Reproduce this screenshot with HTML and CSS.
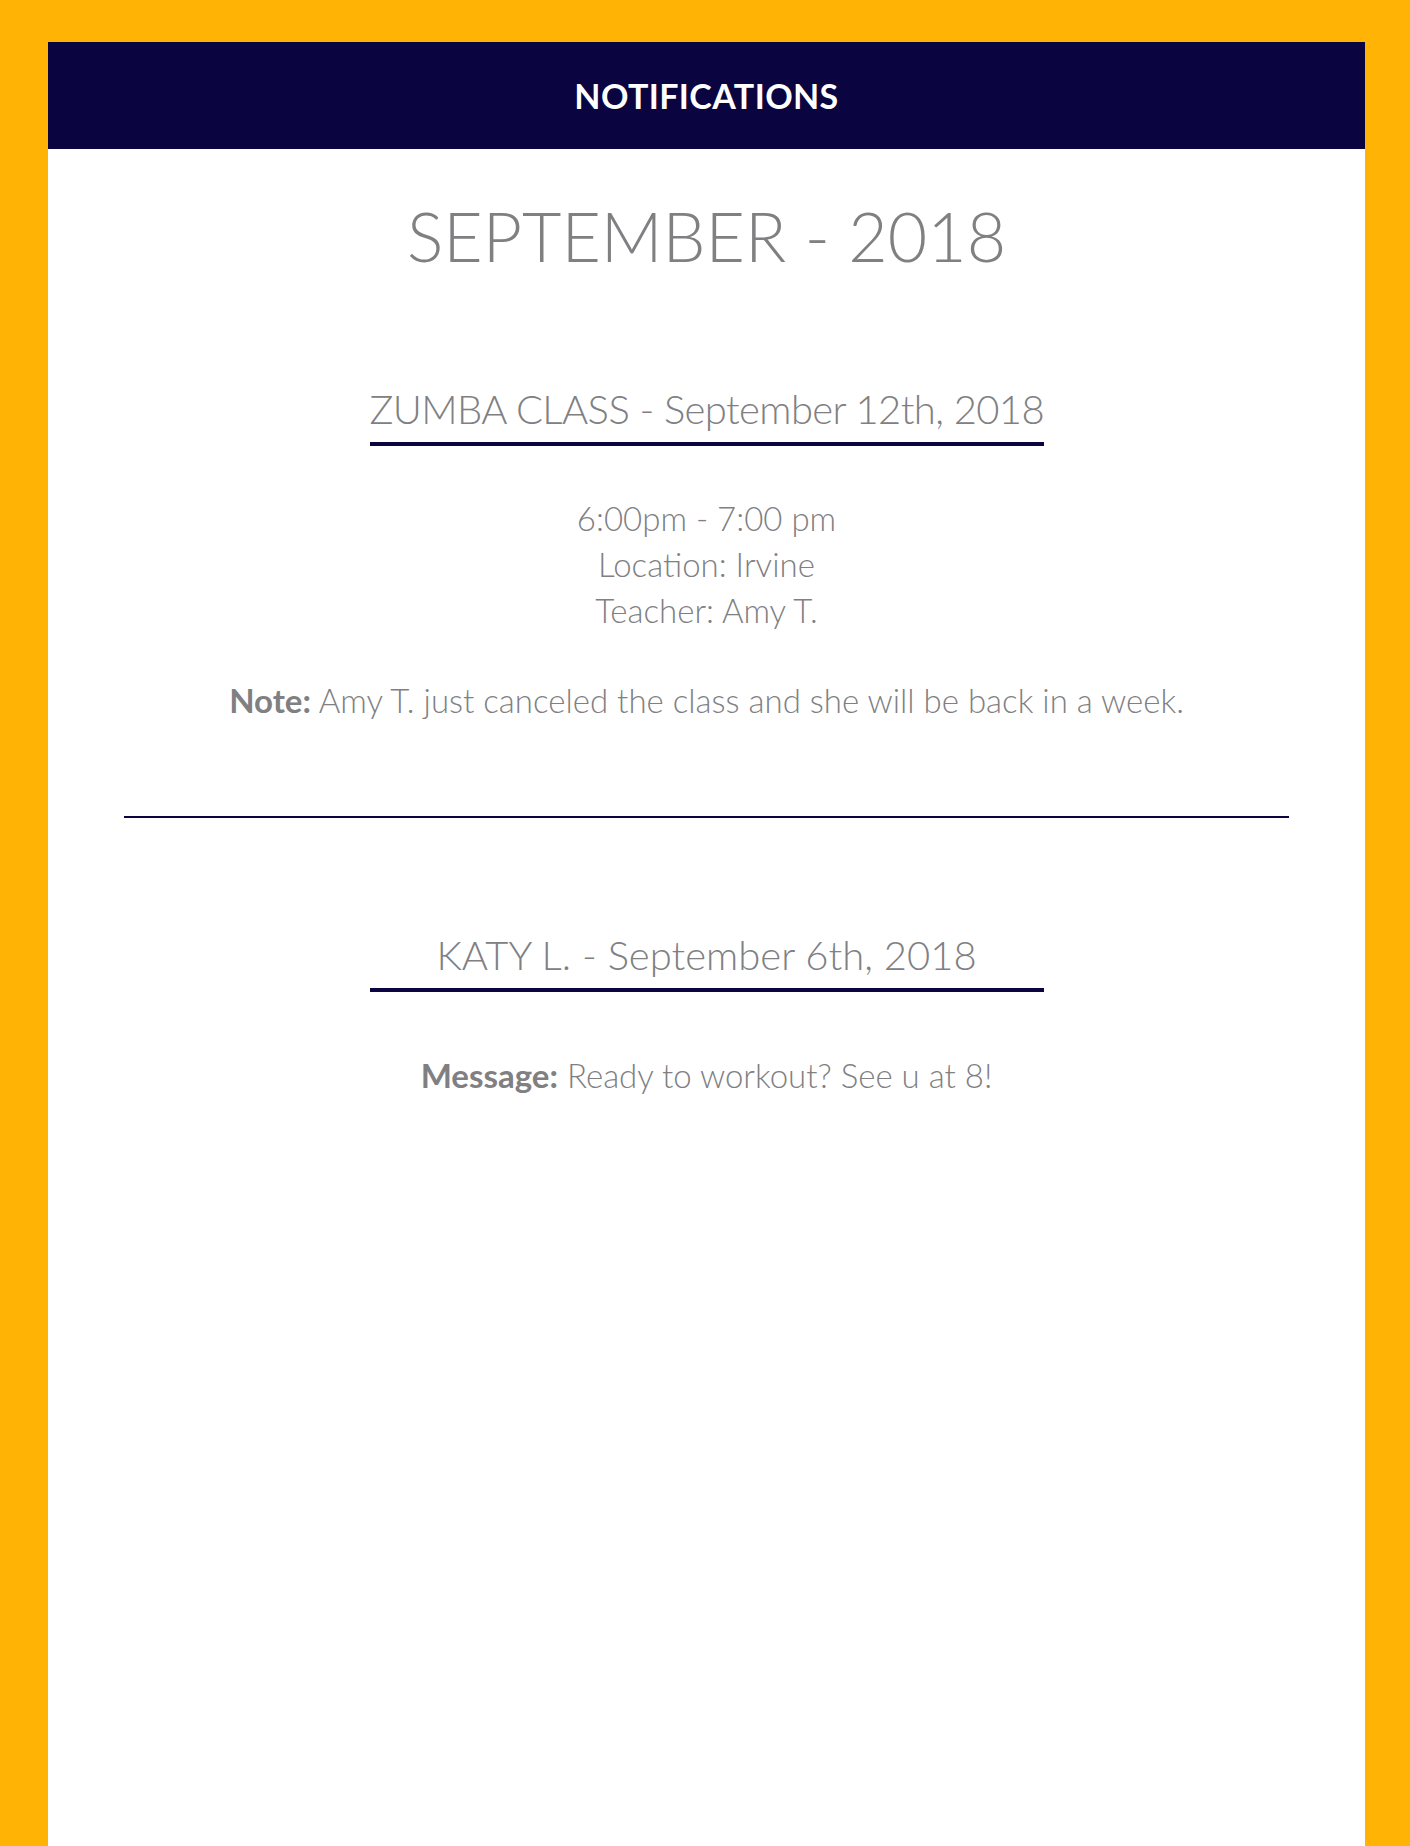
FILE: index.html
```html
<!DOCTYPE html>
<html lang="en">
<head>
<meta charset="utf-8">
<title>Notifications</title>
<link rel="stylesheet" href="styles.css">
</head>
<body>
<div class="panel">
  <header class="topbar">
    <h1 class="topbar-title">NOTIFICATIONS</h1>
  </header>
  <main class="content">
    <h2 class="month">SEPTEMBER - 2018</h2>

    <section class="notice notice-first">
      <h3 class="notice-title notice-title-tight">ZUMBA CLASS - September 12th, 2018</h3>
      <div class="notice-details">
        <p>6:00pm - 7:00 pm</p>
        <p>Location: Irvine</p>
        <p>Teacher: Amy T.</p>
      </div>
      <p class="notice-note"><strong>Note:</strong> Amy T. just canceled the class and she will be back in a week.</p>
    </section>

    <hr class="divider">

    <section class="notice notice-second">
      <h3 class="notice-title">KATY L. - September 6th, 2018</h3>
      <p class="notice-message"><strong>Message:</strong> Ready to workout? See u at 8!</p>
    </section>
  </main>
</div>
</body>
</html>
```

FILE: styles.css
```css
* { box-sizing: border-box; }

html, body {
  margin: 0;
  padding: 0;
}

body {
  background: #ffb305;
  font-family: "Lato", "Liberation Sans", sans-serif;
  color: #808083;
}

.panel {
  margin: 42px 45px 0 48px;
  min-height: 1804px;
  background: #ffffff;
}

.topbar {
  height: 107px;
  background: #0a0540;
  display: flex;
  align-items: center;
  justify-content: center;
}

.topbar-title {
  margin: 0;
  color: #ffffff;
  font-size: 34px;
  font-weight: 700;
  line-height: 1;
  letter-spacing: 0.4px;
}

.content {
  padding: 47px 76px 0;
  text-align: center;
}

.month {
  margin: 0;
  font-size: 68px;
  font-weight: 300;
  line-height: 80px;
}

.notice-title {
  width: 674px;
  margin: 0 auto;
  font-size: 40px;
  font-weight: 300;
  line-height: 50px;
  padding-bottom: 8px;
  border-bottom: 4px solid #0a0540;
  white-space: nowrap;
}

.notice-title-tight {
  letter-spacing: -0.6px;
}

.notice-first .notice-title {
  margin-top: 108px;
}

.notice-second .notice-title {
  margin-top: 112px;
}

.notice-details {
  margin-top: 49px;
}

.notice-details p,
.notice-note,
.notice-message {
  margin: 0;
  font-size: 33px;
  font-weight: 300;
  line-height: 46px;
}

.notice-note {
  margin-top: 44px;
}

.notice-message {
  margin-top: 60px;
}

strong {
  font-weight: 700;
}

.divider {
  margin: 93px 0 0;
  border: 0;
  border-top: 2px solid #0a0540;
  height: 0;
}
```
